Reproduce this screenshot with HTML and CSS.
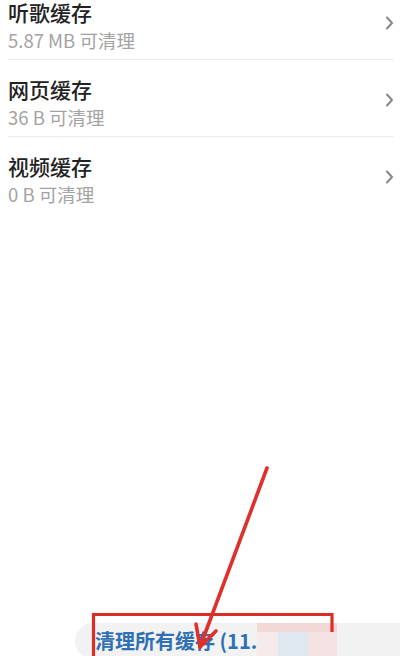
FILE: index.html
```html
<!DOCTYPE html>
<html lang="zh-CN">
<head>
<meta charset="utf-8">
<title>缓存清理</title>
<link rel="stylesheet" href="styles.css">
</head>
<body>
<div class="page">
  <ul class="list">
    <li class="row">
      <div class="text">
        <div class="title">听歌缓存</div>
        <div class="sub">5.87 MB 可清理</div>
      </div>
      <svg class="chev" viewBox="0 0 9 14" width="9" height="14"><path d="M2 1.5 L7 7 L2 12.5" fill="none" stroke="#878787" stroke-width="2" stroke-linecap="round" stroke-linejoin="round"/></svg>
    </li>
    <li class="row">
      <div class="text">
        <div class="title">网页缓存</div>
        <div class="sub">36 B 可清理</div>
      </div>
      <svg class="chev" viewBox="0 0 9 14" width="9" height="14"><path d="M2 1.5 L7 7 L2 12.5" fill="none" stroke="#878787" stroke-width="2" stroke-linecap="round" stroke-linejoin="round"/></svg>
    </li>
    <li class="row">
      <div class="text">
        <div class="title">视频缓存</div>
        <div class="sub">0 B 可清理</div>
      </div>
      <svg class="chev" viewBox="0 0 9 14" width="9" height="14"><path d="M2 1.5 L7 7 L2 12.5" fill="none" stroke="#878787" stroke-width="2" stroke-linecap="round" stroke-linejoin="round"/></svg>
    </li>
  </ul>
  <div class="footer">
    <div class="btn">
      <span class="btn-label">清理所有缓存 (11.</span>
      <span class="blur b1"></span>
      <span class="blur b2"></span>
      <span class="blur b3"></span>
      <span class="blur b4"></span>
    </div>
  </div>
  <svg class="annot" viewBox="0 0 400 656" width="400" height="656">
    <path d="M93.5 660 L93.5 614.5 L332 614.5 L332 632" fill="none" stroke="#de2d28" stroke-width="3.2"/>
    <path d="M267 468 L200 647" fill="none" stroke="#e0302b" stroke-width="3.6" stroke-linecap="round"/>
    <path d="M196 624 L200 647 L216 631" fill="none" stroke="#e0302b" stroke-width="3.6" stroke-linecap="round" stroke-linejoin="round"/>
  </svg>
</div>
</body>
</html>
```
FILE: styles.css
```css
html, body {
  margin: 0;
  padding: 0;
  background: #ffffff;
}
body {
  font-family: "Noto Sans CJK SC", "Noto Sans", sans-serif;
}
.page {
  position: relative;
  width: 400px;
  height: 656px;
  overflow: hidden;
  display: flex;
  flex-direction: column;
}
.list {
  list-style: none;
  margin: 0;
  padding: 0 6px 0 8px;
}
.row {
  display: flex;
  align-items: flex-start;
  padding: 17px 0 7px 0;
  border-bottom: 1px solid #ececec;
}
.row:first-child {
  padding-top: 0;
}
.row:last-child {
  border-bottom: none;
}
.text {
  flex: 1;
}
.title {
  font-size: 21px;
  line-height: 24px;
  font-weight: 500;
  color: #222222;
}
.sub {
  margin-top: 4px;
  font-size: 18.5px;
  line-height: 24px;
  color: #a3a3a3;
}
.chev {
  margin-top: 16px;
  display: block;
}
.footer {
  margin-top: auto;
  padding-left: 75px;
}
.btn {
  position: relative;
  height: 36px;
  background: #f2f2f2;
  border-radius: 18px 0 0 18px;
  display: flex;
  align-items: center;
  padding-left: 20px;
  margin-bottom: -3px;
}
.btn-label {
  font-size: 20px;
  font-weight: 700;
  color: #2f6fb3;
  line-height: 34px;
}
.blur {
  position: absolute;
}
.b1 { left: 182px; top: 0; width: 80px; height: 9px; background: #f3d8d8; }
.b2 { left: 182px; top: 9px; width: 21px; height: 27px; background: #f6eaea; }
.b3 { left: 203px; top: 9px; width: 30px; height: 27px; background: #dfe8f1; }
.b4 { left: 233px; top: 9px; width: 29px; height: 27px; background: #f5e3e3; }
.annot {
  position: absolute;
  left: 0;
  top: 0;
  pointer-events: none;
}
```
